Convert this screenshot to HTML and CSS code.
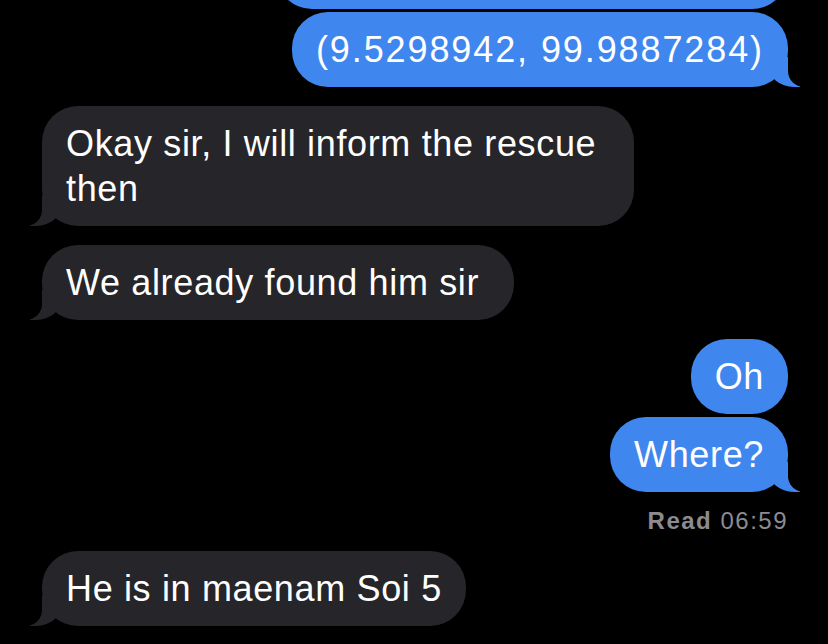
FILE: index.html
```html
<!DOCTYPE html>
<html lang="en">
<head>
    <meta charset="UTF-8">
    <meta name="viewport" content="width=device-width, initial-scale=1.0">
    <title>Messages</title>
    <link rel="stylesheet" href="styles.css">
</head>
<body>
    <div class="thread">
        <div class="row sent">
            <div class="bubble cut"></div>
        </div>
        <div class="row sent gap-s">
            <div class="bubble tail num">(9.5298942, 99.9887284)</div>
        </div>

        <div class="row received gap-l">
            <div class="bubble tail">Okay sir, I will inform the rescue then</div>
        </div>
        <div class="row received gap-l">
            <div class="bubble tail">We already found him sir&nbsp;</div>
        </div>

        <div class="row sent gap-l">
            <div class="bubble">Oh</div>
        </div>
        <div class="row sent gap-s">
            <div class="bubble tail">Where?</div>
        </div>
        <div class="status"><b>Read</b> 06:59</div>

        <div class="row received gap-m">
            <div class="bubble tail">He is in maenam Soi 5</div>
        </div>
    </div>
</body>
</html>
```

FILE: styles.css
```css
body {
    margin: 0;
    background: #000;
    font-family: 'Liberation Sans', Arial, Helvetica, sans-serif;
    overflow: hidden;
}

.thread {
    display: flex;
    flex-direction: column;
    padding: 0 40px 0 42px;
}

.row {
    display: flex;
}

.row.sent {
    justify-content: flex-end;
}

.gap-s { margin-top: 3px; }
.gap-m { margin-top: 16px; }
.gap-l { margin-top: 19px; }

.bubble {
    position: relative;
    box-sizing: border-box;
    max-width: 592px;
    padding: 15px 24px;
    border-radius: 36px;
    font-size: 36px;
    line-height: 45px;
    letter-spacing: 0.65px;
    color: #fff;
}

/* digits are wider in the phone font */
.bubble.num {
    letter-spacing: 1.9px;
}

.sent .bubble {
    background: #4086ef;
}

.received .bubble {
    background: #262529;
}

/* bubble above, scrolled out of view */
.bubble.cut {
    width: 512px;
    height: 73px;
    margin-top: -64px;
}

/* iMessage tail: coloured corner plus a black mask */
.bubble.tail::before,
.bubble.tail::after {
    content: "";
    position: absolute;
    bottom: 0;
    height: 30px;
}

.sent .bubble.tail::before {
    right: -12px;
    width: 32px;
    background: #4086ef;
    border-bottom-left-radius: 26px 22px;
}

.sent .bubble.tail::after {
    right: -40px;
    width: 40px;
    background: #000;
    border-bottom-left-radius: 16px;
}

.received .bubble.tail::before {
    left: -12px;
    width: 32px;
    background: #262529;
    border-bottom-right-radius: 26px 22px;
}

.received .bubble.tail::after {
    left: -40px;
    width: 40px;
    background: #000;
    border-bottom-right-radius: 16px;
}

.status {
    margin-top: 15px;
    text-align: right;
    font-size: 24px;
    line-height: 28px;
    letter-spacing: 1.5px;
    color: #8b8b90;
}

.status b {
    font-weight: bold;
}
```
